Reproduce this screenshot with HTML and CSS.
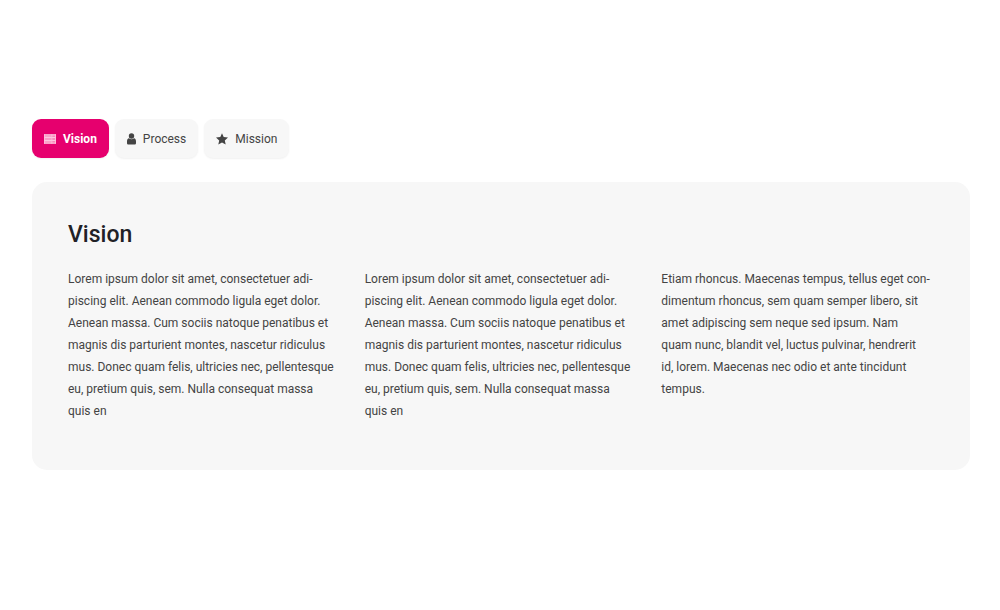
FILE: index.html
```html
<!DOCTYPE html>
<html lang="en">
<head>
<meta charset="utf-8">
<meta name="viewport" content="width=device-width, initial-scale=1">
<title>Vision</title>
<link rel="stylesheet" href="styles.css">
</head>
<body>
<main class="page">
  <div class="tabs" role="tablist">
    <button class="tab tab-active" type="button" role="tab" id="tab-vision" aria-selected="true" aria-controls="panel">
      <svg class="icon icon-wide" viewBox="0 0 13 10" aria-hidden="true">
        <rect width="13" height="10" fill="#f887b9"/>
        <path d="M0 .5h13M0 3.5h13M0 6.5h13M0 9.5h13" stroke="#ffd7e8"/>
        <path d="M.5 0v10M8.5 0v10M12.5 0v10" stroke="#ffc0dc"/>
        <path d="M1 2h7M1 5h7M1 8h7" stroke="#fbb0d1"/>
      </svg>
      Vision
    </button>
    <button class="tab" type="button" role="tab" aria-selected="false" aria-controls="panel">
      <svg class="icon icon-person" viewBox="0 0 9 12" aria-hidden="true">
        <circle cx="4.5" cy="3" r="2.7"/>
        <path d="M2 5.3C.7 5.5 0 6.700 0 8.500V10C0 11 .6 11.500 1.500 11.500H7.500C8.400 11.500 9 11 9 10V8.500C9 6.700 8.300 5.500 7 5.300C5.600 6.600 3.400 6.600 2 5.300Z"/>
      </svg>
      Process
    </button>
    <button class="tab" type="button" role="tab" aria-selected="false" aria-controls="panel">
      <svg class="icon icon-star" viewBox="0 0 12 12" aria-hidden="true">
        <path d="M6 .2L7.700 4.100L12 4.500L8.800 7.400L9.700 11.500L6 9.400L2.300 11.500L3.200 7.400L0 4.500L4.300 4.100Z"/>
      </svg>
      Mission
    </button>
  </div>
  <section class="panel" id="panel" role="tabpanel" aria-labelledby="tab-vision">
    <h2 class="panel-title">Vision</h2>
    <div class="columns">
      <p class="text">Lorem ipsum dolor sit amet, consectetuer adi&shy;piscing elit. Aenean commodo ligula eget dolor. Aenean massa. Cum sociis natoque penatibus et magnis dis parturient montes, nascetur ridiculus mus. Donec quam felis, ultricies nec, pellentesque eu, pretium quis, sem. Nulla consequat massa quis en</p>
      <p class="text">Lorem ipsum dolor sit amet, consectetuer adi&shy;piscing elit. Aenean commodo ligula eget dolor. Aenean massa. Cum sociis natoque penatibus et magnis dis parturient montes, nascetur ridiculus mus. Donec quam felis, ultricies nec, pellentesque eu, pretium quis, sem. Nulla consequat massa quis en</p>
      <p class="text">Etiam rhoncus. Maecenas tempus, tellus eget con&shy;dimentum rhoncus, sem quam semper libero, sit amet adipiscing sem neque sed ipsum. Nam quam nunc, blandit vel, luctus pulvinar, hendrerit id, lorem. Maecenas nec odio et ante tincidunt tempus.</p>
    </div>
  </section>
</main>
</body>
</html>
```
FILE: styles.css
```css
* {
  box-sizing: border-box;
}

body {
  margin: 0;
  background: #fff;
  color: #444;
  font-family: Roboto, "Liberation Sans", sans-serif;
  font-size: 12px;
  line-height: 22px;
}

.page {
  padding: 119px 30px 32px 32px;
}

.tabs {
  display: flex;
  gap: 6px;
  margin-bottom: 24px;
}

.tab {
  display: flex;
  align-items: center;
  gap: 7px;
  padding: 9px 12px 8px;
  border: 0;
  border-radius: 9px;
  background: #f7f7f7;
  box-shadow: 0 1px 2px rgba(0, 0, 0, 0.06);
  color: #444;
  font: inherit;
  cursor: pointer;
}

.tab-active {
  background: #e6006e;
  color: #fff;
  font-weight: 700;
}

.icon {
  flex: none;
  fill: currentColor;
}

.icon-wide {
  width: 12px;
  height: 10px;
}

.icon-person {
  width: 9px;
  height: 12px;
}

.icon-star {
  width: 12px;
  height: 12px;
}

.panel {
  padding: 38px 36px 48px;
  border-radius: 15px;
  background: #f7f7f7;
}

.panel-title {
  margin: 0 0 18px;
  color: #212126;
  font-size: 23px;
  font-weight: 500;
  line-height: 30px;
}

.columns {
  display: grid;
  grid-template-columns: repeat(3, 1fr);
  gap: 24px;
}

.text {
  margin: 0;
  padding-right: 3px;
  hyphens: manual;
}
```
